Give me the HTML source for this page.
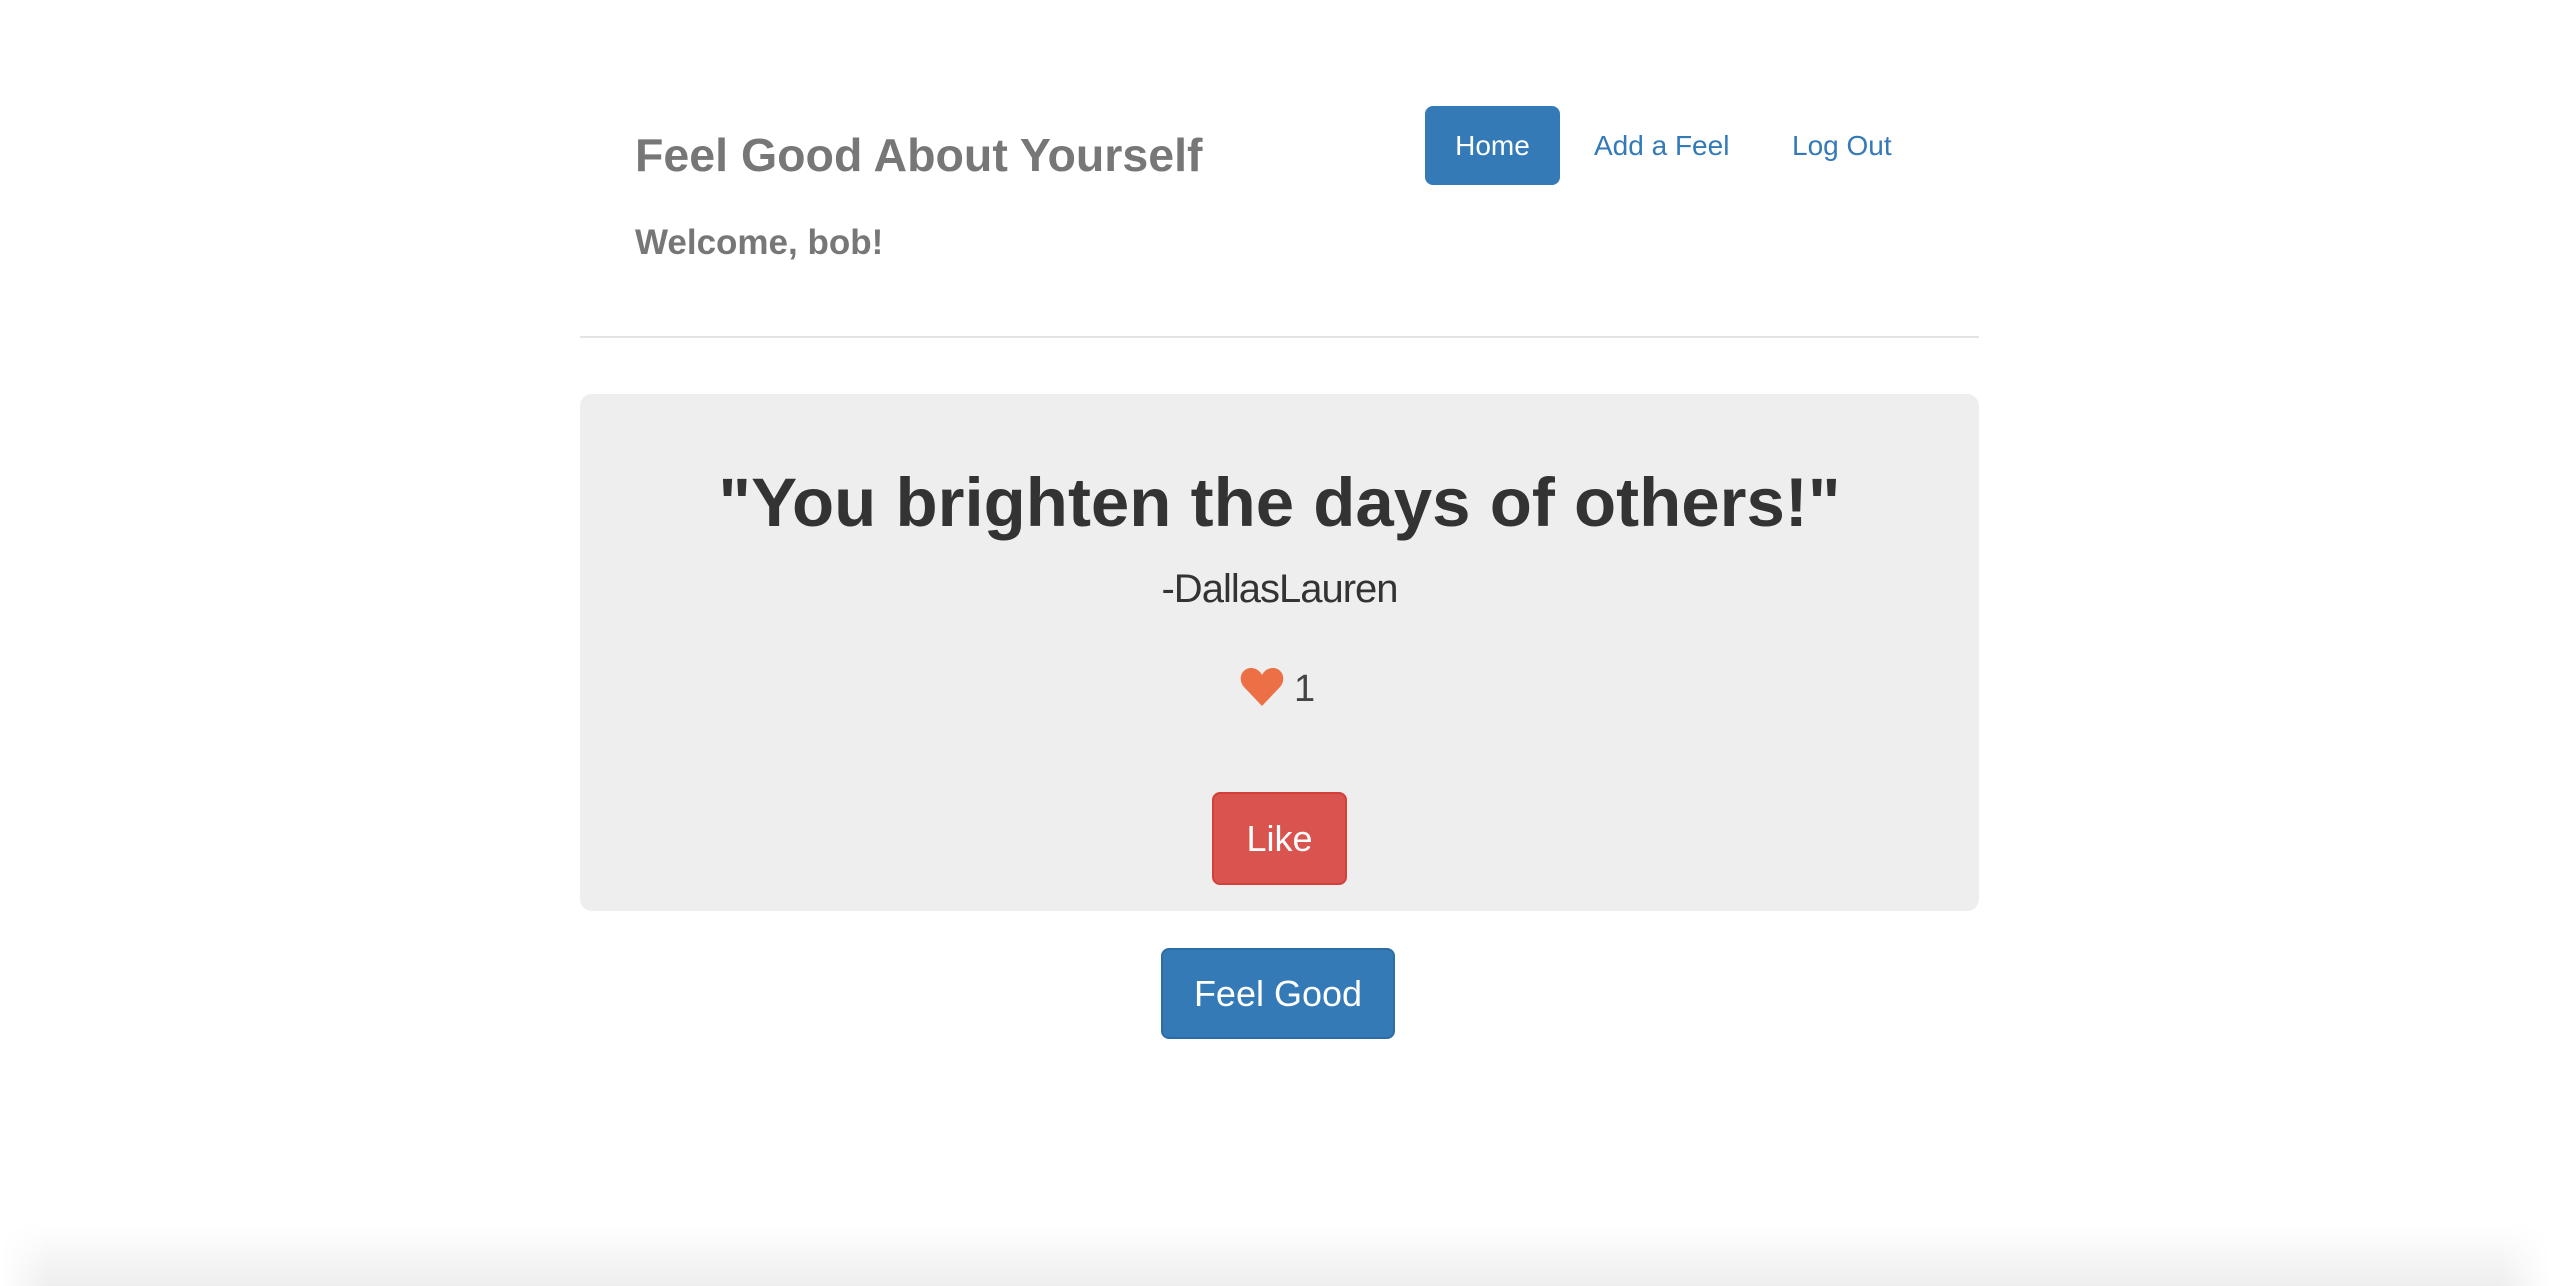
<!DOCTYPE html>
<html><head><meta charset="utf-8"><style>
html,body{margin:0;padding:0;background:#fff;width:2550px;height:1286px;overflow:hidden;position:relative;font-family:"Liberation Sans",Arial,sans-serif}
.a{position:absolute;white-space:nowrap;line-height:1}
.btn{position:absolute;border-radius:8px;color:#fff;display:flex;align-items:center;justify-content:center;box-sizing:border-box}
</style></head><body>
<div class="a" style="left:635px;top:132px;font-size:46.5px;font-weight:bold;color:#777">Feel Good About Yourself</div>
<div class="a" style="left:635px;top:225px;font-size:35px;font-weight:bold;color:#777">Welcome, bob!</div>
<div class="btn" style="left:1425px;top:106px;width:135px;height:79px;background:#337ab7;font-size:28px">Home</div>
<div class="a" style="left:1594px;top:132px;font-size:28px;color:#337ab7">Add a Feel</div>
<div class="a" style="left:1792px;top:132px;font-size:28px;color:#337ab7">Log Out</div>
<div style="position:absolute;left:580px;top:336px;width:1399px;height:2px;background:#e3e3e3"></div>
<div style="position:absolute;left:580px;top:394px;width:1399px;height:517px;background:#eee;border-radius:12px"></div>
<div class="a" style="left:580px;width:1399px;text-align:center;top:468px;font-size:69px;font-weight:bold;color:#333">"You brighten the days of others!"</div>
<div class="a" style="left:580px;width:1399px;text-align:center;top:569px;font-size:40px;color:#333;letter-spacing:-1px">-DallasLauren</div>
<svg style="position:absolute;left:1240px;top:668px" width="44" height="38" viewBox="0 0 44 38"><path d="M22 38 L4 19 C-3 11 2 0 11 0 C16 0 20 3 22 7 C24 3 28 0 33 0 C42 0 47 11 40 19 Z" fill="#ec6f45"/></svg>
<div class="a" style="left:1294px;top:670px;font-size:38px;color:#444">1</div>
<div class="btn" style="left:1212px;top:792px;width:135px;height:93px;background:#d9534f;border:2px solid #d43f3a;font-size:36px">Like</div>
<div class="btn" style="left:1161px;top:948px;width:234px;height:91px;background:#337ab7;border:2px solid #2e6da4;font-size:36px">Feel Good</div>
<div style="position:absolute;left:0;top:1225px;width:2550px;height:61px;background:linear-gradient(#fff,#eee);-webkit-mask-image:linear-gradient(90deg,transparent 0,#000 50px,#000 2500px,transparent 2550px);mask-image:linear-gradient(90deg,transparent 0,#000 50px,#000 2500px,transparent 2550px)"></div>
</body></html>
